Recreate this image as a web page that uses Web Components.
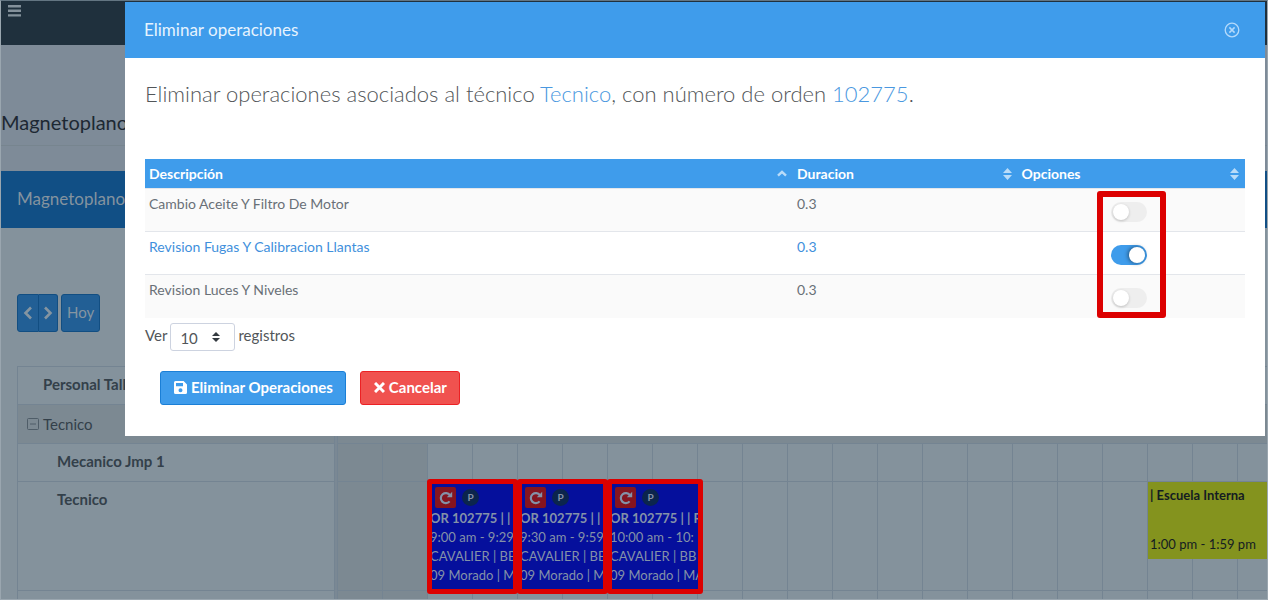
<!DOCTYPE html>
<html lang="es">
<head>
<meta charset="utf-8">
<meta name="viewport" content="width=device-width, initial-scale=1">
<title>Eliminar operaciones</title>
<style>
    body {
        margin: 0;
        font-family: Lato, "Open Sans", sans-serif;
        font-size: 14px;
        background: #84929c;
    }
</style>
</head>
<body>
<app-shell>
    <page-header title="Magnetoplano"></page-header>
    <calendar-panel title="Magnetoplano">
        <calendar-toolbar></calendar-toolbar>
        <resource-timeline></resource-timeline>
    </calendar-panel>
    <modal-dialog slot="modal" title="Eliminar operaciones">
        <operations-summary technician="Tecnico" order="102775"></operations-summary>
        <operations-table></operations-table>
        <page-length></page-length>
        <action-button slot="actions" icon="save">Eliminar Operaciones</action-button>
        <action-button slot="actions" icon="times" kind="danger">Cancelar</action-button>
    </modal-dialog>
</app-shell>

<script>
const icons = {
    save: `<svg width="13" height="13" viewBox="0 0 13 13" aria-hidden="true"><path fill="currentColor" fill-rule="evenodd" d="M1.5 0H9.6L13 3.4V11.5A1.5 1.5 0 0 1 11.5 13H1.5A1.5 1.5 0 0 1 0 11.5V1.5A1.5 1.5 0 0 1 1.5 0ZM2 2V5.2H9V2ZM6.5 7.2A2 2 0 1 0 6.5 11.2A2 2 0 1 0 6.5 7.2Z"/></svg>`,
    times: `<svg width="11" height="11" viewBox="0 0 11 11" aria-hidden="true"><path fill="none" stroke="currentColor" stroke-width="3" d="M1 1L10 10M10 1L1 10"/></svg>`,
    redo: `<svg width="14" height="14" viewBox="0 0 14 14" aria-hidden="true"><path fill="none" stroke="currentColor" stroke-width="2.2" d="M10.6 10.4A5 5 0 1 1 10.9 4.2"/><path fill="currentColor" d="M13.2 0.8V6.2H7.8Z"/></svg>`,
    sort: `<svg width="9" height="12" viewBox="0 0 9 12" aria-hidden="true"><path fill="currentColor" d="M4.5 0L9 5H0ZM4.5 12L9 7H0Z"/></svg>`,
    up: `<svg width="10" height="7" viewBox="0 0 10 7" aria-hidden="true"><path fill="none" stroke="currentColor" stroke-width="2.4" d="M1 5.6L5 1.8L9 5.6"/></svg>`
};

class appShell extends HTMLElement {
    constructor() {
        super();
        this.attachShadow({ mode: "open" });
    }
    connectedCallback() {
        this.shadowRoot.innerHTML = `
        <style>
            :host {
                display: block;
                box-sizing: border-box;
                height: 100vh;
                overflow: hidden;
                border: 1px solid #9aa6af;
                border-top-color: #637582;
                background: #84929c;
            }
            header {
                height: 44px;
                background: #1f303d;
            }
            button {
                display: block;
                padding: 4px 7px;
                border: 0;
                background: none;
                color: #84919b;
            }
            svg { display: block; }
        </style>
        <header>
            <button aria-label="Menu">
                <svg width="13" height="12" viewBox="0 0 13 12"><path fill="currentColor" d="M0 0H13V2.4H0ZM0 4.6H13V7H0ZM0 9.2H13V11.6H0Z"/></svg>
            </button>
        </header>
        <slot></slot>
        <slot name="modal"></slot>
        `;
    }
}
customElements.define("app-shell", appShell);

class pageHeader extends HTMLElement {
    constructor() {
        super();
        this.attachShadow({ mode: "open" });
    }
    connectedCallback() {
        this.shadowRoot.innerHTML = `
        <style>
            :host {
                display: block;
                height: 126px;
                background: #7e8b98;
            }
            h1 {
                margin: 0;
                padding: 63px 0 8px;
                border-bottom: 1px solid #77858f;
                font-size: 20px;
                line-height: 29px;
                font-weight: 400;
                color: #1d2833;
            }
        </style>
        <h1>${this.getAttribute("title")}</h1>
        `;
    }
}
customElements.define("page-header", pageHeader);

class calendarPanel extends HTMLElement {
    constructor() {
        super();
        this.attachShadow({ mode: "open" });
    }
    connectedCallback() {
        this.shadowRoot.innerHTML = `
        <style>
            :host { display: block; }
            h2 {
                margin: 0;
                padding: 0 16px 1px;
                background: #114f85;
                color: #84939f;
                font-size: 17px;
                line-height: 56px;
                font-weight: 400;
            }
            .body { padding: 66px 0 0 16px; }
        </style>
        <h2>${this.getAttribute("title")}</h2>
        <div class="body"><slot></slot></div>
        `;
    }
}
customElements.define("calendar-panel", calendarPanel);

class calendarToolbar extends HTMLElement {
    constructor() {
        super();
        this.attachShadow({ mode: "open" });
    }
    connectedCallback() {
        this.shadowRoot.innerHTML = `
        <style>
            :host {
                display: flex;
                gap: 3px;
                margin-bottom: 34px;
            }
            .group { display: flex; }
            button {
                height: 38px;
                padding: 0 5px 2px;
                border: 1px solid #124e82;
                border-radius: 3px;
                background: #225f95;
                color: #8595a1;
                font: 15px Lato, sans-serif;
            }
            .group button {
                padding: 0 5px;
                border-radius: 3px 0 0 3px;
            }
            .group button:last-child {
                padding: 0 4px;
                border-left: 0;
                border-radius: 0 3px 3px 0;
            }
            svg { display: block; }
        </style>
        <div class="group">
            <button aria-label="Anterior"><svg width="10" height="14" viewBox="0 0 10 14"><path fill="none" stroke="currentColor" stroke-width="2.6" d="M8 1.5L2.5 7L8 12.5"/></svg></button>
            <button aria-label="Siguiente"><svg width="10" height="14" viewBox="0 0 10 14"><path fill="none" stroke="currentColor" stroke-width="2.6" d="M2 1.5L7.5 7L2 12.5"/></svg></button>
        </div>
        <button>Hoy</button>
        `;
    }
}
customElements.define("calendar-toolbar", calendarToolbar);

class resourceTimeline extends HTMLElement {
    constructor() {
        super();
        this.attachShadow({ mode: "open" });
    }
    connectedCallback() {
        this.shadowRoot.innerHTML = `
        <style>
            :host {
                display: grid;
                grid-template-columns: 316px 4px minmax(0, 1fr);
                --line: #748492;
                --shade: #7c8992;
                border: 1px solid var(--line);
                border-right: 0;
                color: #33404a;
                font-size: 15px;
            }
            .resources, .lanes {
                display: grid;
                grid-template-rows: 38px 39px 38px 109px 40px;
            }
            .resources > div {
                box-sizing: border-box;
                border-bottom: 1px solid var(--line);
                line-height: 34px;
                padding-left: 39px;
                font-weight: 700;
            }
            .resources .head { padding-left: 25px; }
            .resources .group {
                display: flex;
                align-items: center;
                gap: 4px;
                padding-left: 9px;
                background: var(--shade);
                font-weight: 400;
            }
            .divider {
                border: solid var(--line);
                border-width: 0 1px;
                background: #7a8894;
            }
            .lanes > div {
                box-sizing: border-box;
                border-bottom: 1px solid var(--line);
                background:
                    repeating-linear-gradient(90deg, transparent 0 44px, var(--line) 44px 45px),
                    linear-gradient(90deg, var(--shade) 90px, transparent 90px);
            }
            .lanes .group { background: var(--shade); }
            .lanes .events {
                display: grid;
                grid-auto-columns: 45px;
                grid-auto-flow: column;
                align-items: start;
            }
        </style>
        <div class="resources">
            <div class="head">Personal Taller</div>
            <div class="group">
                <svg width="12" height="12" viewBox="0 0 12 12" aria-hidden="true"><rect x="0.5" y="0.5" width="11" height="11" rx="1" fill="none" stroke="#4f5d68"/><path stroke="#4f5d68" d="M3 6H9"/></svg>
                Tecnico
            </div>
            <div>Mecanico Jmp 1</div>
            <div>Tecnico</div>
            <div></div>
        </div>
        <div class="divider"></div>
        <div class="lanes">
            <div></div>
            <div class="group"></div>
            <div></div>
            <div class="events">
                <order-event style="grid-column: 3 / span 2" title="OR 102775 | | C" time="9:00 am - 9:29" vehicle="CAVALIER | BB" detail="09 Morado | M"></order-event>
                <order-event style="grid-column: 5 / span 2" title="OR 102775 | | R" time="9:30 am - 9:59" vehicle="CAVALIER | BB" detail="09 Morado | M"></order-event>
                <order-event style="grid-column: 7 / span 2" title="OR 102775 | | R" time="10:00 am - 10:" vehicle="CAVALIER | BB" detail="09 Morado | MA"></order-event>
                <school-event style="grid-column: 19 / span 4" title="| Escuela Interna" time="1:00 pm - 1:59 pm"></school-event>
            </div>
            <div></div>
        </div>
        `;
    }
}
customElements.define("resource-timeline", resourceTimeline);

class orderEvent extends HTMLElement {
    constructor() {
        super();
        this.attachShadow({ mode: "open" });
    }
    connectedCallback() {
        this.shadowRoot.innerHTML = `
        <style>
            :host {
                display: block;
                position: relative;
                height: 110px;
                background: #050f9c;
                color: #8492a8;
                font-size: 13px;
                line-height: 19px;
            }
            .text {
                overflow: hidden;
                white-space: nowrap;
                height: 105px;
                padding: 5px 2px 0;
            }
            .badges {
                display: flex;
                align-items: center;
                gap: 6px;
                margin: 0 5px 1px;
            }
            .redo {
                display: grid;
                place-items: center;
                width: 21px;
                height: 21px;
                border-radius: 2px;
                background: #85141f;
            }
            .part {
                width: 17px;
                height: 17px;
                border-radius: 50%;
                background: #0b254d;
                font-size: 10px;
                line-height: 17px;
                font-weight: 700;
                text-align: center;
            }
            strong { display: block; }
            .frame {
                position: absolute;
                inset: -3px 0 -2px -1px;
                border: 5px solid #dc0000;
                border-radius: 3px;
            }
            :host(:nth-of-type(3)) .frame { right: -5px; }
        </style>
        <div class="text">
            <div class="badges"><span class="redo">${icons.redo}</span><span class="part">P</span></div>
            <strong>${this.getAttribute("title")}</strong>
            <div>${this.getAttribute("time")}</div>
            <div>${this.getAttribute("vehicle")}</div>
            <div>${this.getAttribute("detail")}</div>
        </div>
        <div class="frame"></div>
        `;
    }
}
customElements.define("order-event", orderEvent);

class schoolEvent extends HTMLElement {
    constructor() {
        super();
        this.attachShadow({ mode: "open" });
    }
    connectedCallback() {
        this.shadowRoot.innerHTML = `
        <style>
            :host {
                display: flex;
                flex-direction: column;
                justify-content: space-between;
                box-sizing: border-box;
                height: 77px;
                padding: 4px 2px 5px;
                background: #84931e;
                color: #141c22;
                font-size: 13px;
                line-height: 19px;
            }
        </style>
        <strong>${this.getAttribute("title")}</strong>
        <span>${this.getAttribute("time")}</span>
        `;
    }
}
customElements.define("school-event", schoolEvent);

class modalDialog extends HTMLElement {
    constructor() {
        super();
        this.attachShadow({ mode: "open" });
    }
    connectedCallback() {
        this.shadowRoot.innerHTML = `
        <style>
            :host {
                display: block;
                position: fixed;
                top: 2px;
                left: 125px;
                right: 3px;
                background: #fff;
                color: #525659;
            }
            header {
                display: flex;
                align-items: center;
                justify-content: space-between;
                height: 56px;
                padding: 0 25px 0 19px;
                background: #3f9ceb;
                color: #e6f3fe;
            }
            h2 {
                margin: 0;
                font-size: 17px;
                line-height: 24px;
                font-weight: 400;
            }
            header button {
                padding: 0;
                border: 0;
                background: none;
                color: #b4dafb;
            }
            svg { display: block; }
            .body { padding: 20px 20px 0; }
            footer {
                display: flex;
                gap: 14px;
                padding: 20px 35px 31px;
            }
        </style>
        <section role="dialog" aria-labelledby="title">
            <header>
                <h2 id="title">${this.getAttribute("title")}</h2>
                <button aria-label="Cerrar"><svg width="16" height="16" viewBox="0 0 16 16"><circle cx="8" cy="8" r="6.8" fill="none" stroke="currentColor" stroke-width="1.3"/><path stroke="currentColor" stroke-width="1.5" d="M5.4 5.4L10.6 10.6M10.6 5.4L5.4 10.6"/></svg></button>
            </header>
            <div class="body"><slot></slot></div>
            <footer><slot name="actions"></slot></footer>
        </section>
        `;
    }
}
customElements.define("modal-dialog", modalDialog);

class operationsSummary extends HTMLElement {
    constructor() {
        super();
        this.attachShadow({ mode: "open" });
    }
    connectedCallback() {
        this.shadowRoot.innerHTML = `
        <style>
            :host { display: block; }
            p {
                margin: 0 0 49px;
                font-size: 22px;
                line-height: 32px;
                font-weight: 300;
            }
            span { color: #4a98e0; }
        </style>
        <p>Eliminar operaciones asociados al técnico <span>${this.getAttribute("technician")}</span>, con número de orden <span>${this.getAttribute("order")}</span>.</p>
        `;
    }
}
customElements.define("operations-summary", operationsSummary);

class toggleSwitch extends HTMLElement {
    constructor() {
        super();
        this.attachShadow({ mode: "open" });
    }
    connectedCallback() {
        this.shadowRoot.innerHTML = `
        <style>
            :host { display: inline-block; }
            input {
                display: block;
                appearance: none;
                width: 36px;
                height: 20px;
                margin: 0;
                padding: 2px;
                box-sizing: border-box;
                border-radius: 10px;
                background: #eee;
            }
            input::before {
                content: "";
                display: block;
                width: 16px;
                height: 16px;
                border-radius: 50%;
                background: #fff;
                box-shadow: 0 1px 3px rgba(0, 0, 0, 0.2);
            }
            input:checked { background: #3f9ceb; }
            input:checked::before {
                margin-left: auto;
                box-shadow: -1px 0 4px rgba(0, 0, 0, 0.5);
            }
        </style>
        <input type="checkbox" aria-label="${this.getAttribute("label")}" ${this.hasAttribute("checked") ? "checked" : ""}>
        `;
    }
}
customElements.define("toggle-switch", toggleSwitch);

class operationsTable extends HTMLElement {
    constructor() {
        super();
        this.attachShadow({ mode: "open" });
        this.rows = [
            { name: "Cambio Aceite Y Filtro De Motor", time: "0.3", on: false },
            { name: "Revision Fugas Y Calibracion Llantas", time: "0.3", on: true },
            { name: "Revision Luces Y Niveles", time: "0.3", on: false }
        ];
    }
    getRow(row) {
        return `
        <tr class="${row.on ? "on" : ""}">
            <td>${row.name}</td>
            <td>${row.time}</td>
            <td class="options"><toggle-switch label="${row.name}" ${row.on ? "checked" : ""}></toggle-switch></td>
        </tr>`;
    }
    connectedCallback() {
        this.shadowRoot.innerHTML = `
        <style>
            :host {
                display: block;
                position: relative;
            }
            table {
                width: 100%;
                table-layout: fixed;
                border-collapse: collapse;
                font-size: 14px;
                line-height: 19px;
                color: #697077;
            }
            th {
                padding: 5px 6px 5px 4px;
                background: #3f9ceb;
                color: #fff;
                text-align: left;
            }
            th:first-child { width: 58%; }
            th:nth-child(2) { width: 19.5%; }
            th div {
                display: flex;
                align-items: center;
                justify-content: space-between;
            }
            th svg { color: #b9dcf9; }
            td {
                box-sizing: border-box;
                height: 43px;
                padding: 5px 4px;
                border-top: 1px solid #e3e6eb;
                vertical-align: top;
            }
            tbody tr:nth-child(odd) { background: #fafafa; }
            tbody tr.on { color: #3f90dc; }
            .options {
                padding: 13px 5px 0 0;
                text-align: center;
                line-height: 0;
            }
            .frame {
                position: absolute;
                top: 32px;
                bottom: 0;
                right: 79px;
                width: 57px;
                border: 6px solid #dc0000;
                border-radius: 3px;
            }
        </style>
        <table>
            <thead>
                <tr>
                    <th><div>Descripción ${icons.up}</div></th>
                    <th><div>Duracion ${icons.sort}</div></th>
                    <th><div>Opciones ${icons.sort}</div></th>
                </tr>
            </thead>
            <tbody>${this.rows.map(row => this.getRow(row)).join("")}</tbody>
        </table>
        <div class="frame"></div>
        `;
    }
}
customElements.define("operations-table", operationsTable);

class pageLength extends HTMLElement {
    constructor() {
        super();
        this.attachShadow({ mode: "open" });
    }
    connectedCallback() {
        this.shadowRoot.innerHTML = `
        <style>
            :host {
                display: block;
                padding-top: 5px;
            }
            label {
                display: flex;
                gap: 3px;
                font-size: 15px;
                line-height: 25px;
            }
            .select {
                display: grid;
                width: 65px;
                align-items: center;
            }
            select, svg { grid-area: 1 / 1; }
            select {
                appearance: none;
                height: 28px;
                padding: 2px 9px 0;
                border: 1px solid #cdd3e0;
                border-radius: 3px;
                background: #fff;
                color: #525659;
                font: 15px Lato, sans-serif;
            }
            svg {
                justify-self: end;
                margin-right: 15px;
                pointer-events: none;
            }
        </style>
        <label>Ver
            <span class="select">
                <select><option>10</option><option>25</option><option>50</option></select>
                <svg width="8" height="10" viewBox="0 0 8 10" aria-hidden="true"><path fill="#343a40" d="M4 0L8 4H0ZM4 10L8 6H0Z"/></svg>
            </span>
            registros
        </label>
        `;
    }
}
customElements.define("page-length", pageLength);

class actionButton extends HTMLElement {
    constructor() {
        super();
        this.attachShadow({ mode: "open" });
    }
    connectedCallback() {
        this.shadowRoot.innerHTML = `
        <style>
            :host {
                --fill: #3f9ceb;
                --edge: #1b7fd6;
            }
            :host([kind="danger"]) {
                --fill: #f0524f;
                --edge: #ec2124;
            }
            button {
                display: flex;
                align-items: center;
                gap: 4px;
                height: 34px;
                padding: 0 12px 0 13px;
                border: 1px solid var(--edge);
                border-radius: 3px;
                background: var(--fill);
                color: #fff;
                font: 700 15px Lato, sans-serif;
            }
            span { padding-bottom: 1px; }
        </style>
        <button>${icons[this.getAttribute("icon")]}<span><slot></slot></span></button>
        `;
    }
}
customElements.define("action-button", actionButton);
</script>
</body>
</html>
